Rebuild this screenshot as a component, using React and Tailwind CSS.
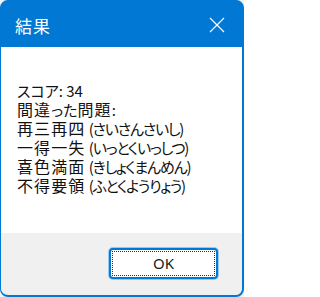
import React from "react";

const font = { fontFamily: '"Noto Sans CJK JP", "Noto Sans", sans-serif' };

function K({ children }) {
  return <span className="text-[16px] tracking-[1.1px]">{children}</span>;
}
function R({ children }) {
  return <span className="tracking-[-1.2px]">{children}</span>;
}

export default function App() {
  const items = [
    ["再三再四", "(さいさんさいし)"],
    ["一得一失", "(いっとくいっしつ)"],
    ["喜色満面", "(きしょくまんめん)"],
    ["不得要領", "(ふとくようりょう)"],
  ];
  return (
    <div className="w-[244px] h-[297px] bg-[#f3f3f3]" style={font}>
      <div className="w-full h-full flex flex-col rounded-[8px] overflow-hidden border-l border-t border-r-2 border-b-2 border-[#0078d4] bg-[#0078d4]">
        <div className="h-[46px] shrink-0 flex items-center justify-between pl-[14px] pr-[17px] text-white">
          <span className="text-[17px] leading-none tracking-[1px] mt-[2px]">結果</span>
          <svg width="16" height="16" viewBox="0 0 16 16" className="mt-[1px]">
            <path d="M1 1 L15 15 M15 1 L1 15" stroke="white" strokeWidth="1.2" fill="none" />
          </svg>
        </div>
        <div className="flex-1 bg-white pt-[35px] pl-[16px] text-[#111] text-[15px] leading-[18px] [font-feature-settings:'palt']">
          <div className="whitespace-nowrap">スコア: 34</div>
          <div className="whitespace-nowrap">
            <K>間違</K>った<K>問題</K>:
          </div>
          {items.map(([k, r]) => (
            <div key={k} className="whitespace-nowrap">
              <K>{k}</K> <R>{r}</R>
            </div>
          ))}
        </div>
        <div className="h-[62px] shrink-0 bg-[#f0f0f0] flex items-start justify-end pt-[15px] pr-[24px]">
          <button className="w-[109px] h-[31px] rounded-[4px] border-2 border-[#0078d4] bg-white p-[1px] shadow-[0_0_0_1px_#9cc8ee]">
            <div className="w-full h-full border border-dotted border-[#333] flex items-center justify-center text-[15px] text-[#1a1a1a] leading-none" style={{ fontFamily: '"Noto Sans", sans-serif' }}>
              OK
            </div>
          </button>
        </div>
      </div>
    </div>
  );
}
